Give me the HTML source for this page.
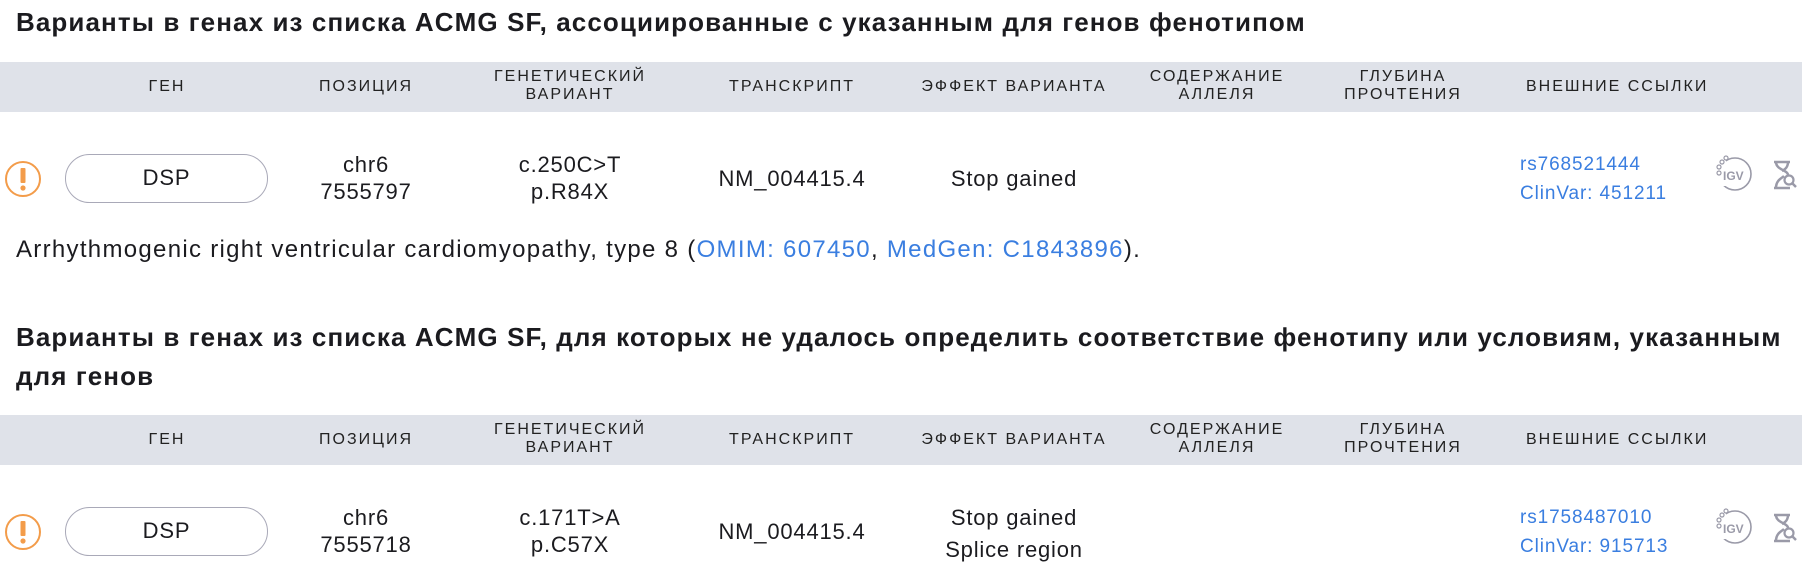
<!DOCTYPE html>
<html><head><meta charset="utf-8"><style>
*{margin:0;padding:0;box-sizing:border-box}
body{width:1802px;height:565px;overflow:hidden;background:#fff;font-family:"Liberation Sans",sans-serif;color:#1b1b1f;position:relative}
.a{position:absolute;white-space:nowrap}
.t{font-weight:bold;font-size:26px;letter-spacing:1.1px;left:16px}
.hd{position:absolute;left:0;width:1802px;height:50px;background:#dfe2e9}
.h{position:absolute;font-size:16px;letter-spacing:2px;text-align:center;line-height:18px;transform:translateX(-50%);white-space:nowrap;color:#222}
.c{position:absolute;font-size:22px;letter-spacing:0.8px;text-align:center;line-height:27px;transform:translateX(-50%);white-space:nowrap}
.pill{position:absolute;left:65px;width:203px;height:49px;border:1.5px solid #a9a9b8;border-radius:25px;font-size:22px;letter-spacing:0.8px;text-align:center;line-height:46px}
.l{position:absolute;left:1520px;font-size:19px;letter-spacing:0.9px;color:#3a7ee0;line-height:29px;white-space:nowrap}
.lk{color:#3a7ee0}
</style></head><body>
<div class="a t" style="top:7px">Варианты в генах из списка ACMG SF, ассоциированные с указанным для генов фенотипом</div>

<div class="hd" style="top:62px"></div>
<div class="h" style="left:167px;top:78px">ГЕН</div>
<div class="h" style="left:366px;top:78px">ПОЗИЦИЯ</div>
<div class="h" style="left:570px;top:68px">ГЕНЕТИЧЕСКИЙ<br>ВАРИАНТ</div>
<div class="h" style="left:792px;top:78px">ТРАНСКРИПТ</div>
<div class="h" style="left:1014px;top:78px">ЭФФЕКТ ВАРИАНТА</div>
<div class="h" style="left:1217px;top:68px">СОДЕРЖАНИЕ<br>АЛЛЕЛЯ</div>
<div class="h" style="left:1403px;top:68px">ГЛУБИНА<br>ПРОЧТЕНИЯ</div>
<div class="h" style="left:1526px;top:78px;transform:none">ВНЕШНИЕ ССЫЛКИ</div>

<svg class="a" style="left:4px;top:160px" width="38" height="38" viewBox="0 0 38 38"><circle cx="19" cy="19" r="17" fill="none" stroke="#f39c4a" stroke-width="2"/><rect x="16.5" y="8" width="5" height="15" rx="1" fill="#f39c4a"/><circle cx="19" cy="28" r="2.6" fill="#f39c4a"/></svg>
<div class="pill" style="top:154px">DSP</div>
<div class="c" style="left:366px;top:151px">chr6<br>7555797</div>
<div class="c" style="left:570px;top:151px">c.250C&gt;T<br>p.R84X</div>
<div class="c" style="left:792px;top:165px">NM_004415.4</div>
<div class="c" style="left:1014px;top:165px">Stop gained</div>
<div class="l" style="top:150px">rs768521444<br>ClinVar: 451211</div>
<svg class="a" style="left:1714px;top:154px" width="40" height="38" viewBox="0 0 40 38"><circle cx="21" cy="20" r="16" fill="none" stroke="#9a9aa8" stroke-width="1.6"/><rect x="2" y="6" width="10" height="26" fill="#fff"/><circle cx="8" cy="8" r="2" fill="none" stroke="#9a9aa8" stroke-width="1.2"/><circle cx="12" cy="4" r="2" fill="none" stroke="#9a9aa8" stroke-width="1.2"/><circle cx="5" cy="13" r="2" fill="none" stroke="#9a9aa8" stroke-width="1.2"/><circle cx="5" cy="19" r="2" fill="none" stroke="#9a9aa8" stroke-width="1.2"/><text x="9" y="26" font-family="Liberation Sans" font-weight="bold" font-size="12" fill="#9a9aa8">IGV</text></svg>
<svg class="a" style="left:1771px;top:160px" width="28" height="30" viewBox="0 0 28 30"><path d="M3 2h16M3 28h16M5 2c0 8 12 8 12 13M17 2c0 6-4 8-6 9M5 28c0-8 6-10 8-12" fill="none" stroke="#9a9aa8" stroke-width="2.5"/><circle cx="18" cy="20" r="4.5" fill="#fff" stroke="#9a9aa8" stroke-width="2.2"/><path d="M21 23l4 4" stroke="#9a9aa8" stroke-width="2.5"/></svg>

<div class="a" style="left:16px;top:236px;font-size:24px;letter-spacing:1.3px">Arrhythmogenic right ventricular cardiomyopathy, type 8 (<span class="lk">OMIM: 607450</span>, <span class="lk">MedGen: C1843896</span>).</div>

<div class="a t" style="top:322px">Варианты в генах из списка ACMG SF, для которых не удалось определить соответствие фенотипу или условиям, указанным</div>
<div class="a t" style="top:361px">для генов</div>

<div class="hd" style="top:415px"></div>
<div class="h" style="left:167px;top:431px">ГЕН</div>
<div class="h" style="left:366px;top:431px">ПОЗИЦИЯ</div>
<div class="h" style="left:570px;top:421px">ГЕНЕТИЧЕСКИЙ<br>ВАРИАНТ</div>
<div class="h" style="left:792px;top:431px">ТРАНСКРИПТ</div>
<div class="h" style="left:1014px;top:431px">ЭФФЕКТ ВАРИАНТА</div>
<div class="h" style="left:1217px;top:421px">СОДЕРЖАНИЕ<br>АЛЛЕЛЯ</div>
<div class="h" style="left:1403px;top:421px">ГЛУБИНА<br>ПРОЧТЕНИЯ</div>
<div class="h" style="left:1526px;top:431px;transform:none">ВНЕШНИЕ ССЫЛКИ</div>

<svg class="a" style="left:4px;top:513px" width="38" height="38" viewBox="0 0 38 38"><circle cx="19" cy="19" r="17" fill="none" stroke="#f39c4a" stroke-width="2"/><rect x="16.5" y="8" width="5" height="15" rx="1" fill="#f39c4a"/><circle cx="19" cy="28" r="2.6" fill="#f39c4a"/></svg>
<div class="pill" style="top:507px">DSP</div>
<div class="c" style="left:366px;top:504px">chr6<br>7555718</div>
<div class="c" style="left:570px;top:504px">c.171T&gt;A<br>p.C57X</div>
<div class="c" style="left:792px;top:518px">NM_004415.4</div>
<div class="c" style="left:1014px;top:502px;line-height:32px">Stop gained<br>Splice region</div>
<div class="l" style="top:503px">rs1758487010<br>ClinVar: 915713</div>
<svg class="a" style="left:1714px;top:507px" width="40" height="38" viewBox="0 0 40 38"><circle cx="21" cy="20" r="16" fill="none" stroke="#9a9aa8" stroke-width="1.6"/><rect x="2" y="6" width="10" height="26" fill="#fff"/><circle cx="8" cy="8" r="2" fill="none" stroke="#9a9aa8" stroke-width="1.2"/><circle cx="12" cy="4" r="2" fill="none" stroke="#9a9aa8" stroke-width="1.2"/><circle cx="5" cy="13" r="2" fill="none" stroke="#9a9aa8" stroke-width="1.2"/><circle cx="5" cy="19" r="2" fill="none" stroke="#9a9aa8" stroke-width="1.2"/><text x="9" y="26" font-family="Liberation Sans" font-weight="bold" font-size="12" fill="#9a9aa8">IGV</text></svg>
<svg class="a" style="left:1771px;top:513px" width="28" height="30" viewBox="0 0 28 30"><path d="M3 2h16M3 28h16M5 2c0 8 12 8 12 13M17 2c0 6-4 8-6 9M5 28c0-8 6-10 8-12" fill="none" stroke="#9a9aa8" stroke-width="2.5"/><circle cx="18" cy="20" r="4.5" fill="#fff" stroke="#9a9aa8" stroke-width="2.2"/><path d="M21 23l4 4" stroke="#9a9aa8" stroke-width="2.5"/></svg>
</body></html>
